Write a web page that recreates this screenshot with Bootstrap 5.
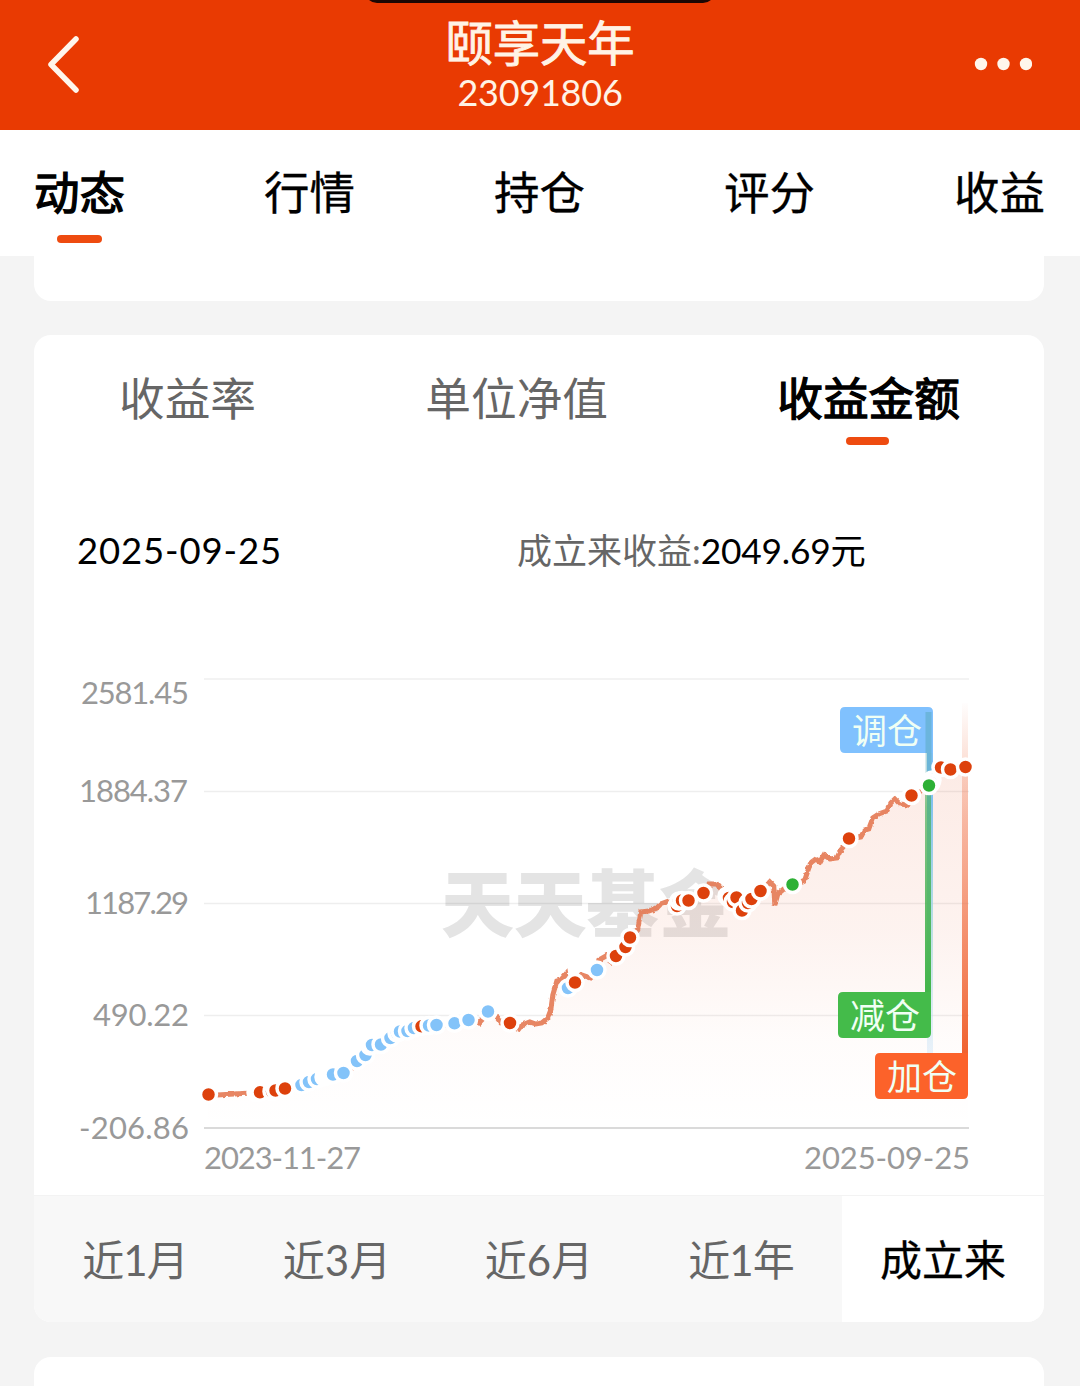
<!DOCTYPE html>
<html lang="zh-CN">
<head>
<meta charset="utf-8">
<meta name="viewport" content="width=device-width, initial-scale=1">
<title>颐享天年</title>
<link href="https://cdn.jsdelivr.net/npm/bootstrap@5.3.0/dist/css/bootstrap.min.css" rel="stylesheet">
<style>
  body { background: #f4f4f4; color: #000; font-family: Lato, "Noto Sans CJK SC", sans-serif; height: 1386px; overflow: hidden; }
  .topbar { height: 130px; background: #e93a02; color: #fff3e6; padding: 0 48px; }
  .notch { width: 350px; height: 12px; top: -9px; left: 365px; border-radius: 0 0 24px 24px; background: #1c0703; }
  .fund-name { font-size: 47.3px; line-height: 50px; -webkit-text-stroke: .9px; margin-top: 18px; }
  .fund-code { font-size: 36px; line-height: 44px; letter-spacing: -.25px; margin-top: 2px; }
  .maintabs { height: 126px; padding: 0 35px 0 34px; }
  .maintabs .nav-link { padding: 0; color: #000; font-size: 45.5px; line-height: 60px; margin-top: 33px; -webkit-text-stroke: .3px; }
  .maintabs .nav-link.active, .kinds .active { -webkit-text-stroke: 1.3px; }
  .marker { width: 45px; height: 8px; border-radius: 4px; background: #ee4b10; }
  .maintabs .marker { margin: 12px auto 0; }
  .sheet { margin: 0 36px 0 34px; background: #fff; border: 0; border-radius: 17px; }
  .stub-top { height: 45px; border-radius: 0 0 17px 17px; }
  .main-card { height: 987px; margin-top: 34px; overflow: hidden; }
  .stub-bottom { height: 29px; margin-top: 35px; border-radius: 17px 17px 0 0; }
  .kinds { height: 165px; padding: 34px 84px 0 85px; font-size: 45.7px; line-height: 60px; color: #666; }
  .kinds .active { color: #000; }
  .kinds .marker { width: 43px; margin: 8px auto 0; position: relative; left: -1px; }
  .summary { height: 140px; padding: 25px 0 0 43px; font-size: 36.5px; line-height: 50px; }
  .summary .day { width: 440px; letter-spacing: .85px; }
  .summary .gain { font-size: 35px; }
  .gain b { color: #666; font-weight: 400; }
  .gain .amount { font-size: 35.3px; letter-spacing: -.2px; }
  .plot { width: 1010px; height: 555px; }
  .plot text { font-family: Lato, "Noto Sans CJK SC", sans-serif; }
  .axis { font-size: 31px; fill: #999; }
  .flagtext { font-size: 35px; fill: #f0fff4; }
  .ranges { height: 127px; background: #f8f8f8; border-top: 1px solid #f3f3f3; color: #666; font-size: 42px; line-height: 60px; }
  .ranges > div { flex: 1 1 0; padding-top: 34px; text-align: center; }
  .ranges .slim { letter-spacing: -1px; }
  .ranges .active { background: #fff; color: #000; -webkit-text-stroke: .3px; }
</style>
<script src="https://cdn.jsdelivr.net/npm/bootstrap@5.3.0/dist/js/bootstrap.bundle.min.js"></script>
</head>
<body>
<header class="topbar d-flex justify-content-between position-relative">
  <div class="notch position-absolute"></div>
  <svg width="80" height="130" viewBox="48 0 80 130"><path d="M76 39 51 64.5 76 90" fill="none" stroke="#fff6ec" stroke-width="5.5" stroke-linecap="round" stroke-linejoin="round"/></svg>
  <div class="text-center">
    <div class="fund-name">颐享天年</div>
    <div class="fund-code">23091806</div>
  </div>
  <svg width="80" height="130" viewBox="952 0 80 130" fill="#fff6ec"><circle cx="981" cy="64" r="6.2"/><circle cx="1003.500" cy="64" r="6.2"/><circle cx="1026" cy="64" r="6.2"/></svg>
</header>
<nav class="nav maintabs bg-white d-flex justify-content-between flex-nowrap align-items-start">
  <a class="nav-link active">动态<div class="marker"></div></a>
  <a class="nav-link">行情</a>
  <a class="nav-link">持仓</a>
  <a class="nav-link">评分</a>
  <a class="nav-link">收益</a>
</nav>
<main>
  <div class="card sheet stub-top"></div>
  <section class="card sheet main-card">
    <div class="kinds d-flex justify-content-between">
      <div>收益率</div>
      <div>单位净值</div>
      <div class="active">收益金额<div class="marker"></div></div>
    </div>
    <div class="summary d-flex">
      <div class="day">2025-09-25</div>
      <div class="gain"><b>成立来收益:</b><span class="amount">2049.69元</span></div>
    </div>
    <svg class="plot d-block" viewBox="34 640 1010 555">
      <defs>
        <linearGradient id="area" x1="0" y1="767" x2="0" y2="1128" gradientUnits="userSpaceOnUse"><stop offset="0" stop-color="#e85a2c" stop-opacity=".12"/><stop offset=".45" stop-color="#e85a2c" stop-opacity=".075"/><stop offset=".75" stop-color="#e85a2c" stop-opacity=".02"/><stop offset="1" stop-color="#e85a2c" stop-opacity="0"/></linearGradient>
        <linearGradient id="poleOrange" x1="0" y1="700" x2="0" y2="1054" gradientUnits="userSpaceOnUse"><stop offset="0" stop-color="#f0693c" stop-opacity="0"/><stop offset=".35" stop-color="#f0693c" stop-opacity=".42"/><stop offset="1" stop-color="#f0622f"/></linearGradient>
        <linearGradient id="poleGreen" x1="0" y1="707" x2="0" y2="992" gradientUnits="userSpaceOnUse"><stop offset="0" stop-color="#43ad55" stop-opacity=".1"/><stop offset=".35" stop-color="#43ad55" stop-opacity=".65"/><stop offset="1" stop-color="#43b54a"/></linearGradient>
        <linearGradient id="poleBlue" x1="0" y1="707" x2="0" y2="1075" gradientUnits="userSpaceOnUse"><stop offset="0" stop-color="#80c1fe"/><stop offset=".25" stop-color="#80c1ee"/><stop offset=".65" stop-color="#a9dce0" stop-opacity=".7"/><stop offset="1" stop-color="#cfe2fb" stop-opacity=".35"/></linearGradient>
        <filter id="rough" x="-5%" y="-5%" width="110%" height="110%"><feTurbulence type="fractalNoise" baseFrequency=".28" numOctaves="1" seed="4"/><feDisplacementMap in="SourceGraphic" scale="3.5" xChannelSelector="R" yChannelSelector="G"/></filter>
      </defs>
      <text x="441" y="931" font-size="73" font-weight="900" fill="#e4e4e4" textLength="291">天天基金</text>
      <g stroke="#000" stroke-opacity=".065" stroke-width="1.500"><path d="M204 679H969M204 791.500H969M204 903.500H969M204 1015.500H969"/></g>
      <path d="M204 1128H969" stroke="#dadada" stroke-width="2"/>
      <path fill="url(#area)" d="M208 1094 250 1092 285 1088 316 1079 344 1073 357 1061 371 1045 390 1038 407 1031 436 1025 468 1020 488 1012 500 1021 519 1026 529 1021 541 1022 547 1017 556 981 566 974 575 981 597 970 607 955 616 956 630 937 637 925 640 911 656 907 668 901 688 900 712 883 736 898 742 909 760 891 771 883 775 904 779 890 793 884 804 879 810 862 823 854 834 858 849 838 861 835 872 817 886 810 894 799 905 804 929 786 941 768H968V1128H208Z"/>
      <path transform="translate(.8 1)" filter="url(#rough)" d="M208 1094.500 250 1092 285 1088 301 1085 316 1079 332 1075 344 1073 357 1061 365 1055 371 1045 381 1044 390 1038 398 1032 407 1031 421 1026 436 1025 454 1023 468 1020 478 1022 488 1012 495 1015 500 1022 510 1023 518 1028 521 1024 529 1021 535 1023 541 1022 547 1017 550 1009 552 994 556 980 560 979 565 973 567 986 575 982 581 974 590 977 597 970 598 959 607 954 611 961 616 956 625 947 630 937 637 928 640 911 648 910 656 907 660 903 668 900 679 901 688 900 703 893 708 883 716 883 722 890 732 903 736 898 742 910 751 899 760 891 769 881 773 885 774 904 777 893 783 888 793 884 804 879 808 867 811 861 815 858 819 861 823 854 829 858 836 857 840 849 849 838 860 836 864 829 868 828 872 817 878 813 886 810 890 802 894 798 899 803 907 804 911 796 920 790 929 786 935 775 941 768 965 767" fill="none" stroke="#e47953" stroke-opacity=".9" stroke-width="5"/>
      <path d="M927 730h6v334h-6z" fill="url(#poleBlue)"/>
      <path d="M845 707h83q5 0 5 5v41h-88q-5 0-5-5v-36q0-5 5-5z" fill="#80c1fe"/>
      <path d="M925.500 712h6v70h-6z" fill="#4aa3ad" opacity=".4"/>
      <path d="M925 786h6v207h-6z" fill="url(#poleGreen)"/>
      <path d="M962 703h6v351h-6z" fill="url(#poleOrange)"/>
      <path d="M843 992h88v41q0 5-5 5h-83q-5 0-5-5v-36q0-5 5-5z" fill="#44bb4a"/>
      <path d="M880 1053h88v41q0 5-5 5h-83q-5 0-5-5v-36q0-5 5-5z" fill="#fc622a"/>
      <g class="flagtext"><text x="852" y="744">调仓</text><text x="850" y="1029">减仓</text><text x="887" y="1090">加仓</text></g>
      <g stroke="#fff" stroke-width="3.500" fill="#dd410c">
        <circle cx="208.500" cy="1094.500" r="8"/>
        <circle cx="256" cy="1092.500" r="8"/><circle cx="258" cy="1092.500" r="8"/><circle cx="260" cy="1092.300" r="8"/><circle cx="272" cy="1091.500" r="8"/><circle cx="275.500" cy="1090.500" r="8"/><circle cx="285" cy="1088.500" r="8"/>
        <g fill="#83c3f9"><circle cx="301.500" cy="1085" r="8"/><circle cx="309" cy="1082" r="8"/><circle cx="317" cy="1079" r="8"/></g>
        <circle cx="324" cy="1077" r="8" fill="#fff"/>
        <g fill="#83c3f9"><circle cx="331" cy="1075" r="8"/><circle cx="333" cy="1074.500" r="8"/><circle cx="343.500" cy="1073" r="8"/><circle cx="357" cy="1061" r="8"/><circle cx="365.500" cy="1055" r="8"/><circle cx="370" cy="1046" r="8"/><circle cx="372" cy="1045" r="8"/><circle cx="381" cy="1044.500" r="8"/><circle cx="390.500" cy="1038" r="8"/><circle cx="397" cy="1033" r="8"/><circle cx="400" cy="1031.500" r="8"/><circle cx="407.500" cy="1031" r="8"/><circle cx="414" cy="1028" r="8"/></g>
        <circle cx="421.500" cy="1026.300" r="8"/>
        <g fill="#83c3f9"><circle cx="429" cy="1025.500" r="8"/><circle cx="436.500" cy="1025" r="8"/><circle cx="454.500" cy="1023.300" r="8"/><circle cx="468.500" cy="1020" r="8"/><circle cx="488" cy="1011.500" r="8"/><circle cx="568" cy="988" r="8"/></g>
        <circle cx="510" cy="1023" r="8"/><circle cx="575" cy="982.500" r="8"/>
        <circle cx="597" cy="970" r="8" fill="#83c3f9"/>
        <circle cx="616" cy="956" r="8"/><circle cx="625.500" cy="947" r="8"/><circle cx="630" cy="937.500" r="8"/>
        <circle cx="677" cy="906" r="8"/><circle cx="679" cy="901" r="8"/><circle cx="682" cy="900.500" r="8"/><circle cx="688.500" cy="900.500" r="8"/><circle cx="703.500" cy="893" r="8"/>
        <circle cx="727" cy="896" r="8"/><circle cx="729" cy="898" r="8"/><circle cx="733" cy="902" r="8"/><circle cx="736.500" cy="897.500" r="8"/><circle cx="742" cy="910.500" r="8"/><circle cx="748" cy="903" r="8"/><circle cx="751.500" cy="899" r="8"/><circle cx="760.500" cy="891" r="8"/>
        <circle cx="792.500" cy="884.500" r="8" fill="#2db035"/>
        <circle cx="849" cy="838.500" r="8"/><circle cx="911.500" cy="795.500" r="8"/>
        <circle cx="932" cy="780" r="8" fill="#83c3f9"/><circle cx="931" cy="783" r="8" fill="#83c3f9"/><circle cx="929" cy="785.500" r="8" fill="#2db035"/>
        <circle cx="941" cy="767.500" r="8"/><circle cx="950.500" cy="769.500" r="8"/><circle cx="965.500" cy="767" r="8"/>
      </g>
      <g class="axis">
        <text x="81" y="704" textLength="108">2581.45</text>
        <text x="79" y="802" textLength="109">1884.37</text>
        <text x="85" y="914" textLength="104">1187.29</text>
        <text x="93" y="1026" textLength="96">490.22</text>
        <text x="79" y="1139" textLength="110">-206.86</text>
        <text x="204" y="1169" textLength="157">2023-11-27</text>
        <text x="804" y="1169" textLength="166">2025-09-25</text>
      </g>
    </svg>
    <div class="ranges d-flex">
      <div class="slim">近1月</div><div>近3月</div><div>近6月</div><div class="slim">近1年</div><div class="active">成立来</div>
    </div>
  </section>
  <div class="card sheet stub-bottom"></div>
</main>
</body>
</html>
